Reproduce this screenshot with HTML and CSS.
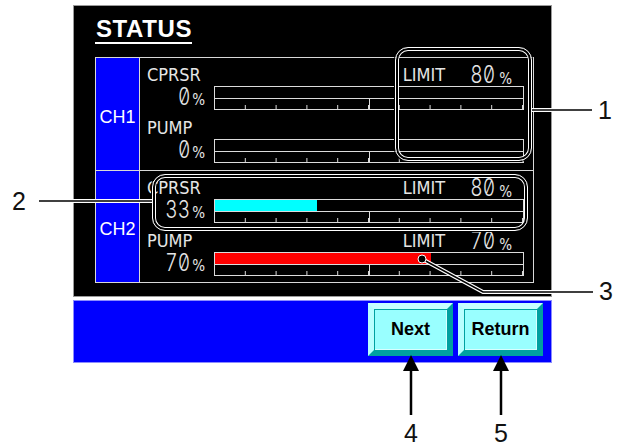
FILE: index.html
```html
<!DOCTYPE html>
<html>
<head>
<meta charset="utf-8">
<link rel="stylesheet" href="styles.css">
</head>
<body>
<div class="device">
  <div class="screen">
    <h1 class="title">STATUS</h1>
    <div class="table">
      <div class="row">
        <div class="ch">CH1</div>
        <div class="data">
          <div class="item">
            <div class="label-line"><span class="label">CPRSR</span><span class="limit"><span class="limit-word">LIMIT</span><span class="num two">80</span><span class="pct">%</span></span></div>
            <div class="value-line"><span class="value"><span class="num one">0</span><span class="pct">%</span></span><div class="bar"><div class="fill"><span class="level" style="width:0%"></span></div><div class="scale"></div></div></div>
          </div>
          <div class="item">
            <div class="label-line"><span class="label">PUMP</span></div>
            <div class="value-line"><span class="value"><span class="num one">0</span><span class="pct">%</span></span><div class="bar"><div class="fill"><span class="level" style="width:0%"></span></div><div class="scale"></div></div></div>
          </div>
        </div>
      </div>
      <div class="row">
        <div class="ch">CH2</div>
        <div class="data">
          <div class="item">
            <div class="label-line"><span class="label">CPRSR</span><span class="limit"><span class="limit-word">LIMIT</span><span class="num two">80</span><span class="pct">%</span></span></div>
            <div class="value-line"><span class="value"><span class="num two">33</span><span class="pct">%</span></span><div class="bar"><div class="fill"><span class="level cyan" style="width:33%"></span></div><div class="scale"></div></div></div>
          </div>
          <div class="item">
            <div class="label-line"><span class="label">PUMP</span><span class="limit"><span class="limit-word">LIMIT</span><span class="num two">70</span><span class="pct">%</span></span></div>
            <div class="value-line"><span class="value"><span class="num two">70</span><span class="pct">%</span></span><div class="bar"><div class="fill"><span class="level red" style="width:70%"></span></div><div class="scale"></div></div></div>
          </div>
        </div>
      </div>
    </div>
  </div>
  <div class="nav">
    <button class="btn">Next</button>
    <button class="btn">Return</button>
  </div>
</div>

<div class="frame frame-1"></div>
<div class="frame frame-2"></div>

<svg class="leaders" width="618" height="447" viewBox="0 0 618 447">
  <g fill="none" stroke="#fff" stroke-width="4">
    <path d="M532 110 H592"/>
    <path d="M39 201 H152"/>
    <path d="M422 259 L483 292 H593"/>
  </g>
  <g fill="none" stroke="#000" stroke-width="1.5">
    <path d="M532 110 H592"/>
    <path d="M39 201 H152"/>
    <path d="M422 259 L483 292 H593"/>
  </g>
  <circle cx="422" cy="259" r="4" fill="#000" stroke="#fff" stroke-width="1"/>
  <g stroke="#000" stroke-width="2.5">
    <path d="M411 368 V415"/>
    <path d="M501 368 V415"/>
  </g>
  <g fill="#000">
    <polygon points="411,355 403,371 419,371"/>
    <polygon points="501,355 493,371 509,371"/>
  </g>
</svg>

<span class="callout c1">1</span>
<span class="callout c2">2</span>
<span class="callout c3">3</span>
<span class="callout c4">4</span>
<span class="callout c5">5</span>
</body>
</html>
```

FILE: styles.css
```css
html, body {
  margin: 0;
  padding: 0;
}

body {
  position: relative;
  width: 618px;
  height: 447px;
  overflow: hidden;
  background: #fff;
  font-family: "Liberation Sans", Arial, sans-serif;
  box-sizing: border-box;
  padding-top: 5px;
}

.device {
  margin-left: 73px;
  width: 479px;
}

.screen {
  box-sizing: border-box;
  height: 292px;
  background: #000;
  border: 1px solid #9a9a9a;
  padding: 10px 0 0 21px;
}

.title {
  display: block;
  width: max-content;
  margin: 0;
  font: bold 24px/26px "Liberation Sans", Arial, sans-serif;
  letter-spacing: 0.6px;
  color: #fff;
  border-bottom: 2px solid #fff;
  padding: 0 0 0 1px;
}

.table {
  margin-top: 13px;
  width: 439px;
  height: 226px;
  box-sizing: border-box;
  border: 1px solid #d8d8d8;
  display: flex;
  flex-direction: column;
}

.row {
  flex: 1;
  display: flex;
}

.row + .row {
  border-top: 1px solid #d8d8d8;
}

.ch {
  box-sizing: border-box;
  width: 44px;
  padding-top: 7px;
  background: #0000ff;
  border-right: 1px solid #d8d8d8;
  display: flex;
  align-items: center;
  justify-content: center;
  color: #fff;
  font: 18px "Liberation Sans", Arial, sans-serif;
}

.data {
  flex: 1;
  padding: 8px 8px 0 7px;
  color: #e6e6e6;
}

.item + .item {
  margin-top: 8px;
}

.label-line {
  display: flex;
  justify-content: space-between;
  align-items: flex-start;
  height: 18px;
  font-family: "DejaVu Sans Condensed", "DejaVu Sans", sans-serif;
  font-stretch: condensed;
  font-size: 18px;
  line-height: 18px;
}

.limit {
  display: flex;
  align-items: flex-start;
  margin-right: 13px;
}

.limit .num {
  line-height: 18px;
}

.limit .pct {
  margin-left: 4px;
  line-height: 18px;
  margin-top: 4px;
}

.num {
  font-family: Inter, "DejaVu Sans Mono", monospace;
  font-weight: 300;
  font-feature-settings: "zero" 1, "tnum" 1;
  font-size: 24px;
  line-height: 22px;
  transform: scaleX(0.8);
  transform-origin: right center;
}

.num.one {
  margin-left: -3px;
}

.num.two {
  margin-left: -6px;
}

.limit .num.two {
  margin-left: 19px;
}

.pct {
  font-family: "DejaVu Sans Condensed", "DejaVu Sans", sans-serif;
  font-stretch: condensed;
  font-size: 15px;
  line-height: 22px;
}

.value-line {
  display: flex;
  align-items: flex-start;
  margin-top: 2px;
}

.value {
  width: 58px;
  margin-right: 9px;
  display: flex;
  justify-content: flex-end;
  align-items: baseline;
}

.value .pct {
  margin-left: 2px;
}

.bar {
  width: 310px;
  height: 24px;
  box-sizing: border-box;
  border: 1px solid #dcdcdc;
  display: flex;
  flex-direction: column;
}

.fill {
  height: 11px;
  border-bottom: 1px solid #dcdcdc;
}

.level {
  display: block;
  height: 100%;
}

.level.cyan {
  background: #00ffff;
}

.level.red {
  background: #ff0000;
}

.scale {
  flex: 1;
  background-image:
    linear-gradient(#dcdcdc, #dcdcdc),
    linear-gradient(to right, transparent calc(100% - 1px), #dcdcdc 0);
  background-size: 1px 100%, 10% 4px;
  background-position: 50% 0, 0 100%;
  background-repeat: no-repeat, repeat-x;
}

.nav {
  box-sizing: border-box;
  margin-top: 3px;
  height: 63px;
  background: #0000ff;
  border: 1px solid #8c8cff;
  display: flex;
  justify-content: flex-end;
  align-items: flex-start;
  gap: 5px;
  padding: 2px 8px 0 0;
}

.btn {
  box-sizing: border-box;
  width: 85px;
  height: 53px;
  padding: 0;
  margin: 0;
  border: 6px solid;
  border-color: #c8ffff #00a0a0 #00a0a0 #b8ffff;
  background: #99ffff;
  box-shadow: inset 1px 1px 0 #00a0a0, inset -1px -1px 0 #d8ffff;
  font: bold 18px "Liberation Sans", Arial, sans-serif;
  color: #000;
  display: flex;
  align-items: center;
  justify-content: center;
}

.frame {
  position: absolute;
  box-sizing: border-box;
  border: 1px solid #fff;
  border-radius: 13px;
  box-shadow: 0 0 0 1px #000, inset 0 0 0 2px #000, inset 0 0 0 3px #fff;
}

.frame-1 {
  left: 395px;
  top: 47px;
  width: 137px;
  height: 114px;
}

.frame-2 {
  left: 152px;
  top: 174px;
  width: 376px;
  height: 57px;
}

.leaders {
  position: absolute;
  left: 0;
  top: 0;
  pointer-events: none;
}

.callout {
  position: absolute;
  font: 25px/25px "Liberation Sans", Arial, sans-serif;
  color: #111;
}

.c1 { left: 598px; top: 98px; }
.c2 { left: 12px; top: 189px; }
.c3 { left: 599px; top: 279px; }
.c4 { left: 404px; top: 421px; }
.c5 { left: 494px; top: 421px; }
```
